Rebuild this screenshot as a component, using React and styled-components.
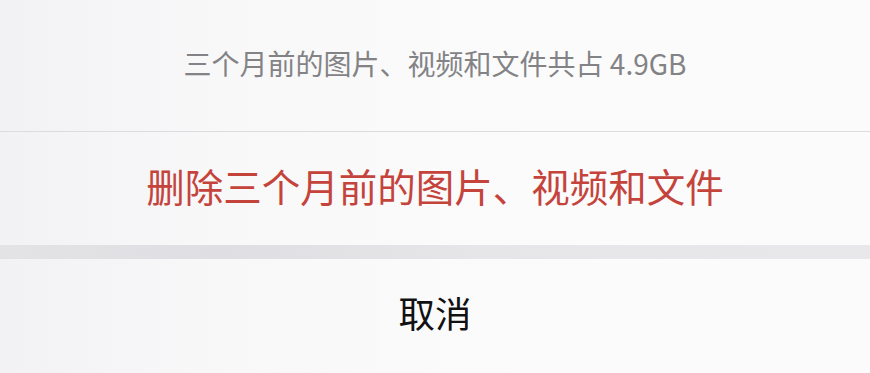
import styled, { createGlobalStyle } from 'styled-components';

const GlobalStyle = createGlobalStyle`
  html, body {
    margin: 0;
    padding: 0;
    background: #f9f9fa;
  }
  body {
    font-family: "Noto Sans CJK SC", "Noto Sans", sans-serif;
  }
`;

const Sheet = styled.div`
  width: 870px;
  height: 373px;
  display: flex;
  flex-direction: column;
  overflow: hidden;
`;

const Group = styled.div`
  display: flex;
  flex-direction: column;
  background: linear-gradient(
    90deg,
    #f2f1f3 0%,
    #f5f4f6 12%,
    #f8f8f9 25%,
    #fbfbfc 60%,
    #fbfbfc 100%
  );
`;

const Title = styled.div`
  height: 131px;
  display: flex;
  align-items: center;
  justify-content: center;
  font-size: 28px;
  color: #838386;
  padding-bottom: 6px;
  box-sizing: border-box;
`;

const Divider = styled.div`
  height: 1px;
  background: #dcdcdf;
`;

const Action = styled.div`
  height: ${(p) => p.$height}px;
  display: flex;
  align-items: center;
  justify-content: center;
  font-size: ${(p) => p.$size}px;
  color: ${(p) => p.$color};
  padding-bottom: 8px;
  box-sizing: border-box;
  cursor: pointer;
`;

const Gap = styled.div`
  height: 14px;
  background: linear-gradient(90deg, #e3e2e5 0%, #dfdee2 25%, #e6e6e9 55%, #e8e8eb 100%);
`;

const App = () => (
  <>
    <GlobalStyle />
    <Sheet>
      <Group>
        <Title>三个月前的图片、视频和文件共占 4.9GB</Title>
        <Divider />
        <Action $height={113} $size={38.5} $color="#c4443c">
          删除三个月前的图片、视频和文件
        </Action>
      </Group>
      <Gap />
      <Group>
        <Action $height={114} $size={36.5} $color="#111111">
          取消
        </Action>
      </Group>
    </Sheet>
  </>
);

export default App;
